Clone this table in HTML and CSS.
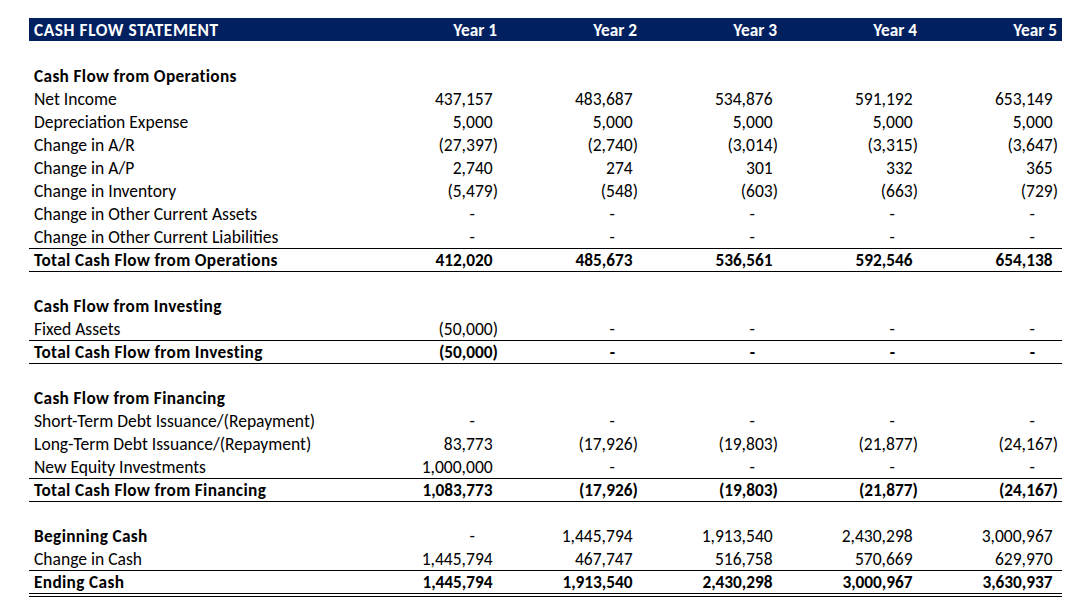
FILE: index.html
```html
<!DOCTYPE html>
<html lang="en">
<head>
<meta charset="utf-8">
<title>Cash Flow Statement</title>
<link rel="stylesheet" href="styles.css">
</head>
<body>
<div class="sheet">
<table class="cf">
  <colgroup>
    <col class="c-label">
    <col class="c-year"><col class="c-year"><col class="c-year"><col class="c-year"><col class="c-year">
  </colgroup>
  <thead>
    <tr class="head">
      <th class="lbl">CASH FLOW STATEMENT</th>
      <th>Year 1</th><th>Year 2</th><th>Year 3</th><th>Year 4</th><th>Year 5</th>
    </tr>
  </thead>
  <tbody>
    <tr class="blank"><td colspan="6"></td></tr>
    <tr class="sec"><td class="lbl">Cash Flow from Operations</td><td></td><td></td><td></td><td></td><td></td></tr>
    <tr><td class="lbl">Net Income</td><td><span class="pos">437,157</span></td><td><span class="pos">483,687</span></td><td><span class="pos">534,876</span></td><td><span class="pos">591,192</span></td><td><span class="pos">653,149</span></td></tr>
    <tr><td class="lbl">Depreciation Expense</td><td><span class="pos">5,000</span></td><td><span class="pos">5,000</span></td><td><span class="pos">5,000</span></td><td><span class="pos">5,000</span></td><td><span class="pos">5,000</span></td></tr>
    <tr><td class="lbl">Change in A/R</td><td>(27,397)</td><td>(2,740)</td><td>(3,014)</td><td>(3,315)</td><td>(3,647)</td></tr>
    <tr><td class="lbl">Change in A/P</td><td><span class="pos">2,740</span></td><td><span class="pos">274</span></td><td><span class="pos">301</span></td><td><span class="pos">332</span></td><td><span class="pos">365</span></td></tr>
    <tr><td class="lbl">Change in Inventory</td><td>(5,479)</td><td>(548)</td><td>(603)</td><td>(663)</td><td>(729)</td></tr>
    <tr><td class="lbl">Change in Other Current Assets</td><td><span class="dash">-</span></td><td><span class="dash">-</span></td><td><span class="dash">-</span></td><td><span class="dash">-</span></td><td><span class="dash">-</span></td></tr>
    <tr><td class="lbl">Change in Other Current Liabilities</td><td><span class="dash">-</span></td><td><span class="dash">-</span></td><td><span class="dash">-</span></td><td><span class="dash">-</span></td><td><span class="dash">-</span></td></tr>
    <tr class="total"><td class="lbl">Total Cash Flow from Operations</td><td><span class="pos">412,020</span></td><td><span class="pos">485,673</span></td><td><span class="pos">536,561</span></td><td><span class="pos">592,546</span></td><td><span class="pos">654,138</span></td></tr>

    <tr class="blank"><td colspan="6"></td></tr>
    <tr class="sec"><td class="lbl">Cash Flow from Investing</td><td></td><td></td><td></td><td></td><td></td></tr>
    <tr><td class="lbl">Fixed Assets</td><td>(50,000)</td><td><span class="dash">-</span></td><td><span class="dash">-</span></td><td><span class="dash">-</span></td><td><span class="dash">-</span></td></tr>
    <tr class="total"><td class="lbl">Total Cash Flow from Investing</td><td>(50,000)</td><td><span class="dash">-</span></td><td><span class="dash">-</span></td><td><span class="dash">-</span></td><td><span class="dash">-</span></td></tr>

    <tr class="blank"><td colspan="6"></td></tr>
    <tr class="sec"><td class="lbl">Cash Flow from Financing</td><td></td><td></td><td></td><td></td><td></td></tr>
    <tr><td class="lbl">Short-Term Debt Issuance/(Repayment)</td><td><span class="dash">-</span></td><td><span class="dash">-</span></td><td><span class="dash">-</span></td><td><span class="dash">-</span></td><td><span class="dash">-</span></td></tr>
    <tr><td class="lbl">Long-Term Debt Issuance/(Repayment)</td><td><span class="pos">83,773</span></td><td>(17,926)</td><td>(19,803)</td><td>(21,877)</td><td>(24,167)</td></tr>
    <tr><td class="lbl">New Equity Investments</td><td><span class="pos">1,000,000</span></td><td><span class="dash">-</span></td><td><span class="dash">-</span></td><td><span class="dash">-</span></td><td><span class="dash">-</span></td></tr>
    <tr class="total"><td class="lbl">Total Cash Flow from Financing</td><td><span class="pos">1,083,773</span></td><td>(17,926)</td><td>(19,803)</td><td>(21,877)</td><td>(24,167)</td></tr>

    <tr class="blank"><td colspan="6"></td></tr>
    <tr class="sec"><td class="lbl">Beginning Cash</td><td class="reg"><span class="dash">-</span></td><td class="reg"><span class="pos">1,445,794</span></td><td class="reg"><span class="pos">1,913,540</span></td><td class="reg"><span class="pos">2,430,298</span></td><td class="reg"><span class="pos">3,000,967</span></td></tr>
    <tr><td class="lbl">Change in Cash</td><td><span class="pos">1,445,794</span></td><td><span class="pos">467,747</span></td><td><span class="pos">516,758</span></td><td><span class="pos">570,669</span></td><td><span class="pos">629,970</span></td></tr>
    <tr class="total ending"><td class="lbl">Ending Cash</td><td><span class="pos">1,445,794</span></td><td><span class="pos">1,913,540</span></td><td><span class="pos">2,430,298</span></td><td><span class="pos">3,000,967</span></td><td><span class="pos">3,630,937</span></td></tr>
  </tbody>
</table>
<div class="double-rule"></div>
</div>
</body>
</html>
```

FILE: styles.css
```css
html, body {
  margin: 0;
  padding: 0;
  background: #ffffff;
}

body {
  padding: 18px 0 0 29px;
  font-family: Carlito, "Liberation Sans", Arial, sans-serif;
  font-size: 18px;
  font-size-adjust: 0.466;
  color: #000000;
}

.sheet {
  width: 1033px;
}

.cf {
  border-collapse: collapse;
  table-layout: fixed;
  width: 1033px;
}

.c-label { width: 333px; }
.c-year { width: 140px; }

.cf th,
.cf td {
  height: 23px;
  padding: 2px 4px 0 5px;
  text-align: right;
  white-space: nowrap;
  line-height: 21px;
  box-sizing: border-box;
}

.cf .lbl {
  text-align: left;
}

.head th {
  background: #002060;
  color: #ffffff;
  font-weight: bold;
  padding-right: 5px;
}

.head th.lbl {
  letter-spacing: 0.6px;
}

.sec td { font-weight: bold; }
.sec td.reg { font-weight: normal; }

.sec td.lbl,
.total td.lbl {
  letter-spacing: 0.35px;
}

.total td {
  font-weight: bold;
  box-shadow: inset 0 1px 0 #000000, 0 1px 0 #000000;
}

.ending td {
  box-shadow: inset 0 1px 0 #000000;
}

.double-rule {
  height: 4px;
  border-top: 1px solid #000000;
  border-bottom: 1px solid #000000;
  box-sizing: border-box;
}

.pos::after {
  content: ")";
  visibility: hidden;
}

.dash::after {
  content: "00)";
  visibility: hidden;
}
```
